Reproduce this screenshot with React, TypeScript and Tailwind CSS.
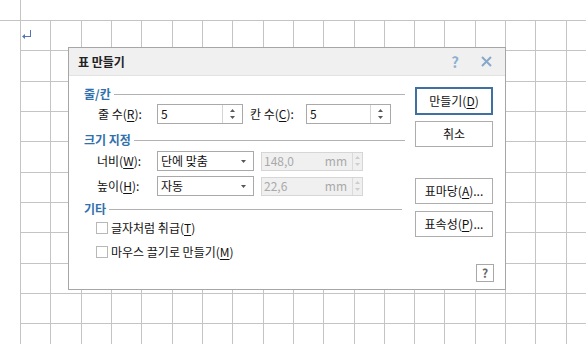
const gridX = Array.from({ length: 19 }, (_, k) => Math.round(20 + 30.32 * k))
const gridY = Array.from({ length: 11 }, (_, k) => Math.round(20 + 30.32 * k))

function GridPaper() {
  return (
    <svg className="absolute inset-0" width={586} height={344}>
      <g stroke="#c4c4c4" strokeWidth={1} shapeRendering="crispEdges">
        {gridX.map((x, i) => (
          <line key={"v" + i} x1={x + 0.5} x2={x + 0.5} y1={i === 0 ? 0 : 20} y2={344} />
        ))}
        {gridY.map((y, i) => (
          <line key={"h" + i} y1={y + 0.5} y2={y + 0.5} x1={i === 0 ? 0 : 20} x2={586} />
        ))}
      </g>
      {/* paragraph mark */}
      <g stroke="#5574b8" strokeWidth={1} fill="none" shapeRendering="crispEdges">
        <line x1={30.5} y1={30} x2={30.5} y2={37} />
        <line x1={24} y1={36.5} x2={31} y2={36.5} />
      </g>
      <path d="M22 36.5 L25 34 L25 39 Z" fill="#5574b8" />
    </svg>
  )
}

function Mn({ c }: { c: string }) {
  return <span className="underline underline-offset-[2px]">{c}</span>
}

function Arrows({ color }: { color: string }) {
  return (
    <div className="flex flex-col items-center gap-[4px]">
      <svg width={5} height={3}>
        <path d="M2.5 0 L5 3 L0 3 Z" fill={color} />
      </svg>
      <svg width={5} height={3}>
        <path d="M0 0 L5 0 L2.5 3 Z" fill={color} />
      </svg>
    </div>
  )
}

function SpinInput({ value, className }: { value: string; className: string }) {
  return (
    <div className={"flex h-[20px] border border-[#a9a9a9] bg-white " + className}>
      <div className="flex flex-1 items-center pl-[3px] text-[12px]">{value}</div>
      <div className="flex w-[20px] items-center justify-center border-l border-[#d4d4d4]">
        <Arrows color="#5a5a5a" />
      </div>
    </div>
  )
}

function Combo({ value }: { value: string }) {
  return (
    <div className="flex h-[20px] w-[97px] items-center border border-[#a9a9a9] bg-white pl-[3px] pr-[7px]">
      <span className="flex-1 text-[12px]">{value}</span>
      <svg width={5} height={3}>
        <path d="M0 0 L5 0 L2.5 3 Z" fill="#555" />
      </svg>
    </div>
  )
}

function Disabled({ value }: { value: string }) {
  return (
    <div className="flex h-[19px] w-[102px] border border-[#d6d6d6] bg-[#f0f0f0] text-[#a9a9a9]">
      <div className="flex flex-1 items-center pl-[2px] pr-[5px] text-[12px]">
        <span className="flex-1">{value}</span>
        <span>mm</span>
      </div>
      <div className="flex w-[10px] items-center justify-center border-l border-[#dadada]">
        <Arrows color="#cdcdcd" />
      </div>
    </div>
  )
}

function Section({ title, className }: { title: string; className: string }) {
  return (
    <div className={"flex h-[14px] items-center gap-[3px] " + className}>
      <span className="text-[12px] font-bold text-[#3070ad]">{title}</span>
      <div className="h-px flex-1 bg-[#b2b2b2]" />
    </div>
  )
}

function Check({ children, className }: { children: React.ReactNode; className: string }) {
  return (
    <div className={"flex h-[16px] items-center gap-[3px] pl-[12px] text-[12px] " + className}>
      <div className="h-[12px] w-[12px] border border-[#b8b8b8] bg-white" />
      <span>{children}</span>
    </div>
  )
}

function Btn({ children, className }: { children: React.ReactNode; className: string }) {
  return (
    <div className={"flex w-[78px] items-center justify-center bg-white text-[12px] " + className}>
      {children}
    </div>
  )
}

export default function App() {
  return (
    <div className="relative h-[344px] w-[586px] overflow-hidden bg-white font-['Noto_Sans_CJK_KR','Noto_Sans',sans-serif] text-[#111] leading-none">
      <GridPaper />

      <div className="absolute left-[68px] top-[47px] flex h-[243px] w-[438px] flex-col border border-[#a6a6a6] bg-white">
        {/* title bar */}
        <div className="flex h-[28px] items-center border-b border-[#e2e2e2] bg-[#f0f0f0] pl-[9px] pr-[13px]">
          <span className="flex-1 text-[12px] font-bold text-[#222]">표 만들기</span>
          <span className="mr-[22px] text-[15px] font-bold text-[#8fb0d2]">?</span>
          <svg width={11} height={11}>
            <path d="M1 1 L10 10 M10 1 L1 10" stroke="#86a8cb" strokeWidth={2} />
          </svg>
        </div>

        <div className="flex flex-1">
          {/* left column */}
          <div className="flex w-[336px] flex-col pl-[15px]">
            <Section title="줄/칸" className="mt-[11px]" />
            <div className="mt-[3px] flex items-center pl-[14px] text-[12px]">
              <span className="w-[59px]">
                줄 수(<Mn c="R" />):
              </span>
              <SpinInput value="5" className="w-[86px]" />
              <span className="ml-[7px] w-[56px]">
                칸 수(<Mn c="C" />):
              </span>
              <SpinInput value="5" className="w-[85px]" />
            </div>

            <Section title="크기 지정" className="mt-[9px]" />
            <div className="mt-[4px] flex items-center pl-[13px] text-[12px]">
              <span className="w-[60px]">
                너비(<Mn c="W" />):
              </span>
              <Combo value="단에 맞춤" />
              <div className="ml-[7px]">
                <Disabled value="148,0" />
              </div>
            </div>
            <div className="mt-[5px] flex items-center pl-[13px] text-[12px]">
              <span className="w-[60px]">
                높이(<Mn c="H" />):
              </span>
              <Combo value="자동" />
              <div className="ml-[7px]">
                <Disabled value="22,6" />
              </div>
            </div>

            <Section title="기타" className="mt-[6px] w-[318px]" />
            <Check className="mt-[4px]">
              글자처럼 취급(<Mn c="T" />)
            </Check>
            <Check className="mt-[8px]">
              마우스 끌기로 만들기(<Mn c="M" />)
            </Check>
          </div>

          {/* right column */}
          <div className="ml-[10px] flex w-[78px] flex-col">
            <Btn className="mt-[11px] h-[28px] border-2 border-[#3f70a0]">
              만들기(<Mn c="D" />)
            </Btn>
            <Btn className="mt-[6px] h-[26px] border border-[#adadad]">취소</Btn>
            <Btn className="mt-[31px] h-[26px] border border-[#adadad]">
              표마당(<Mn c="A" />)...
            </Btn>
            <Btn className="mt-[7px] h-[26px] border border-[#adadad]">
              표속성(<Mn c="P" />)...
            </Btn>
            <div className="ml-auto mr-[-1px] mt-[27px] flex h-[18px] w-[18px] items-center justify-center border border-[#a8a8a8] text-[12px] font-bold text-[#666]">
              ?
            </div>
          </div>
        </div>
      </div>
    </div>
  )
}
